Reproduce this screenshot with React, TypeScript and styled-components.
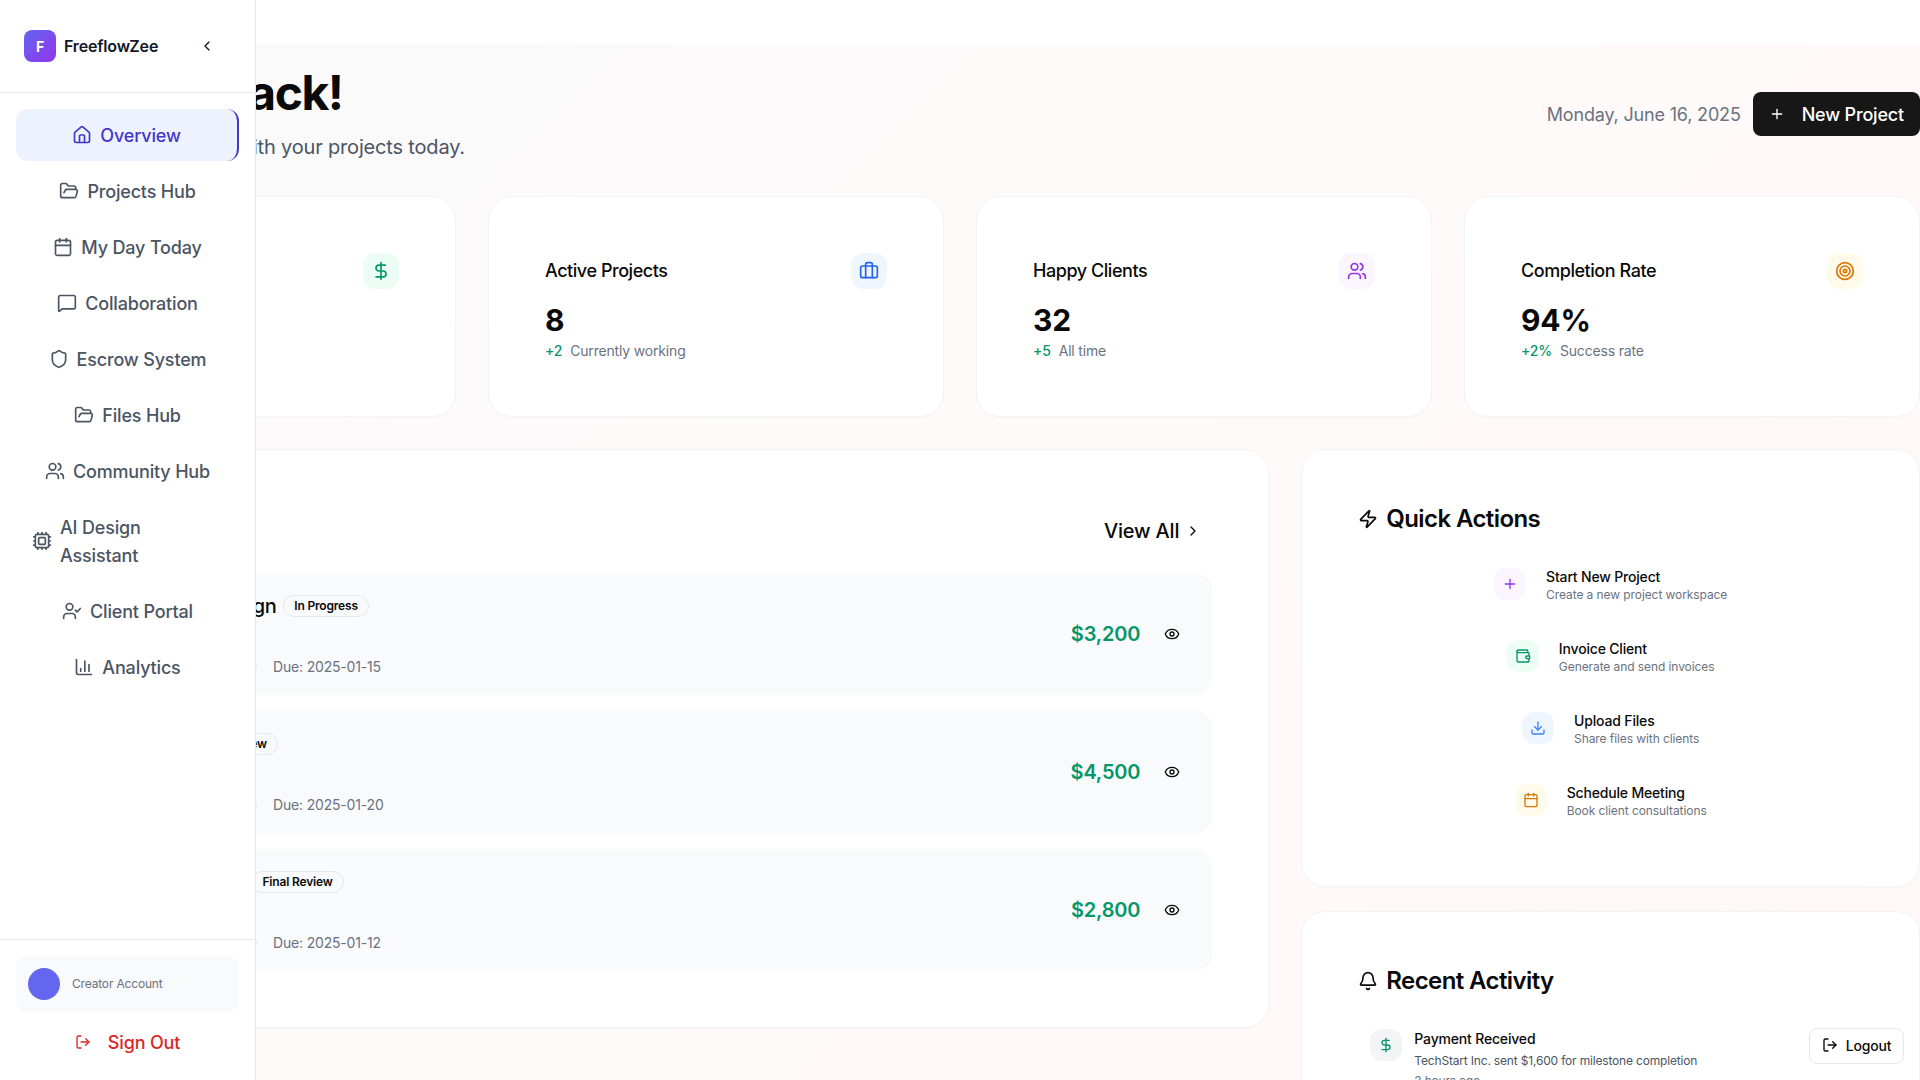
import React from 'react';
import styled, { createGlobalStyle } from 'styled-components';
import {
  House, FolderOpen, Calendar, MessageSquare, Shield, Users, Cpu, UserCheck, ChartColumn,
  LogOut, ChevronLeft, ChevronRight, DollarSign, Briefcase, Target, Zap, Bell, Plus, Wallet,
  Download, Eye, Folder,
} from 'lucide-react';

const Global = createGlobalStyle`
  html, body { margin: 0; padding: 0; height: 100%; overflow: hidden; background: #fff; }
  body { font-family: Inter, "Noto Sans", sans-serif; color: #0a0a0a; letter-spacing: -0.011em; }
  * { box-sizing: border-box; }
  button { font-family: inherit; background: none; border: 0; cursor: pointer; padding: 0; color: inherit; letter-spacing: inherit; }
  svg { display: block; flex: none; }
`;

const Sidebar = styled.aside`
  position: fixed; top: 0; left: 0; bottom: 0; width: 256px; z-index: 10;
  display: flex; flex-direction: column;
  background: #fff; border-right: 1px solid #e5e7eb;
`;
const SideHeader = styled.div`
  display: flex; align-items: center; justify-content: space-between;
  padding: 24px; border-bottom: 1px solid #e5e7eb; height: 93px;
`;
const Brand = styled.div`display: flex; align-items: center; gap: 8px;`;
const Logo = styled.div`
  width: 32px; height: 32px; border-radius: 8px; display: flex; align-items: center; justify-content: center;
  background: linear-gradient(135deg, #6366f1, #9333ea); color: #fff; font-size: 14px; font-weight: 700;
`;
const BrandName = styled.span`font-size: 16px; line-height: 24px; font-weight: 600; color: #111827;`;
const Collapse = styled.button`
  width: 48px; height: 44px; display: flex; align-items: center; justify-content: center; color: #111827;
`;
const Nav = styled.nav`flex: 1; display: flex; flex-direction: column; gap: 4px; padding: 16px;`;
const NavItem = styled.button<{ $active?: boolean }>`
  display: flex; align-items: center; justify-content: center; gap: 8px;
  padding: 12px 16px; border-radius: 12px;
  font-size: 18px; line-height: 28px; font-weight: 500; text-align: left; width: 100%;
  color: ${p => (p.$active ? '#4338ca' : '#4b5563')};
  background: ${p => (p.$active ? '#eef2ff' : 'transparent')};
  border-right: ${p => (p.$active ? '2px solid #4338ca' : '0')};
`;
const NavLabel = styled.span`display: block; padding-top: 1px; margin-bottom: -1px;`;
const SideFooter = styled.div`
  border-top: 1px solid #e5e7eb; padding: 16px; display: flex; flex-direction: column; gap: 8px;
`;
const Account = styled.div`
  display: flex; align-items: center; gap: 12px; padding: 12px; border-radius: 12px; background: #f9fafb;
`;
const Avatar = styled.div`width: 32px; height: 32px; border-radius: 50%; background: #6366f1;`;
const AccountLabel = styled.span`font-size: 12px; line-height: 16px; color: #6b7280;`;
const SignOut = styled.button`
  height: 44px; display: flex; align-items: center; justify-content: center; gap: 17px;
  font-size: 18px; font-weight: 500; color: #dc2626;
`;

const Page = styled.div`padding-top: 44px; width: 1920px;`;
const Main = styled.main`
  padding: 25px 0 48px;
  background: linear-gradient(135deg, #f9fafb 0%, #fffafa 50%, #fff7f7 100%);
`;
const PageHead = styled.header`
  display: flex; align-items: center; justify-content: space-between; margin-bottom: 35px;
`;
const Title = styled.h1`margin: 0 0 16px; font-size: 48px; line-height: 48px; font-weight: 700; letter-spacing: -0.03em; color: #0a0a0a;`;
const Subtitle = styled.p`margin: 0; font-size: 20px; line-height: 28px; color: #4b5563;`;
const HeadRight = styled.div`display: flex; align-items: center; gap: 12px; margin-bottom: 2px;`;
const DateText = styled.span`font-size: 18px; line-height: 28px; padding-top: 2px; color: #6b7280;`;
const NewProject = styled.button`
  height: 44px; padding: 0 16px; display: flex; align-items: center; gap: 17px; border-radius: 8px;
  background: #171717; color: #fff; font-size: 18px; font-weight: 500;
`;

const Stats = styled.section`display: grid; grid-template-columns: repeat(4, 1fr); gap: 32px; margin-bottom: 32px;`;
const Card = styled.div`
  background: #fff; border: 1px solid #f3f4f6; border-radius: 24px; padding: 56px;
  box-shadow: 0 1px 2px rgba(0,0,0,0.02);
`;
const StatCard = styled(Card)`padding-bottom: 55px;`;
const StatHead = styled.div`display: flex; align-items: center; justify-content: space-between; margin-bottom: 13px;`;
const StatLabel = styled.span`font-size: 18px; line-height: 28px; font-weight: 500; letter-spacing: -0.025em; color: #0a0a0a;`;
const IconBox = styled.div<{ $bg: string; $fg: string; $size?: number }>`
  width: ${p => p.$size ?? 32}px; height: ${p => p.$size ?? 32}px; border-radius: 12px; flex: none;
  display: flex; align-items: center; justify-content: center;
  background: ${p => p.$bg}; color: ${p => p.$fg};
`;
const StatValue = styled.div`font-size: 30px; line-height: 36px; font-weight: 700; margin-bottom: 3px; color: #0a0a0a;`;
const StatSub = styled.div`display: flex; gap: 8px; font-size: 14px; line-height: 20px; color: #6b7280;`;
const Delta = styled.span`color: #059669; font-weight: 500;`;

const Lower = styled.section`display: grid; grid-template-columns: repeat(3, 1fr); gap: 32px; align-items: start;`;
const ListCard = styled(Card)`grid-column: span 2;`;
const Side = styled.div`display: flex; flex-direction: column; gap: 24px;`;
const ListHead = styled.div`display: flex; align-items: center; justify-content: space-between; height: 48px; margin-bottom: 19px;`;
const CardTitle = styled.h2`
  margin: 0; display: flex; align-items: center; gap: 8px; font-size: 24px; line-height: 24px; font-weight: 600;
  letter-spacing: -0.025em; color: #0a0a0a;
`;
const SideCardTitle = styled(CardTitle)`margin-top: 1px;`;
const ViewAll = styled.button`
  display: flex; align-items: center; gap: 6px; padding: 0 11px; height: 44px; margin-top: 2px;
  font-size: 20px; font-weight: 500; color: #0a0a0a;
`;
const Rows = styled.div`display: flex; flex-direction: column; gap: 16px;`;
const Row = styled.div`
  display: flex; align-items: center; justify-content: space-between; height: 122px; padding: 0 24px;
  background: #f9fafb; border-radius: 16px;
`;
const RowTitleLine = styled.div`display: flex; align-items: center; gap: 7px; margin-bottom: 8px;`;
const RowTitle = styled.h3`margin: 0; font-size: 20px; line-height: 28px; font-weight: 500; letter-spacing: -0.025em; color: #0a0a0a;`;
const Badge = styled.span`
  height: 22px; padding: 0 10px; display: inline-flex; align-items: center; border-radius: 999px;
  border: 1px solid #e5e7eb; font-size: 12px; font-weight: 600; color: #0a0a0a;
`;
const Client = styled.div`font-size: 16px; line-height: 20px; color: #4b5563; margin-bottom: 9px;`;
const Meta = styled.div`display: flex; align-items: center; gap: 16px; font-size: 14px; line-height: 20px; color: #6b7280;`;
const Track = styled.div`width: 176px; height: 8px; border-radius: 4px; background: #e5e7eb; overflow: hidden;`;
const Fill = styled.div`height: 100%; background: #171717;`;
const RowRight = styled.div`display: flex; align-items: center; gap: 16px;`;
const Amount = styled.span`font-size: 20px; line-height: 28px; font-weight: 600; color: #059669;`;
const EyeBtn = styled.button`width: 32px; height: 32px; display: flex; align-items: center; justify-content: center; color: #0a0a0a;`;

const ActionList = styled.div`display: flex; flex-direction: column; gap: 12px; margin-top: 23px;`;
const Action = styled.button`
  height: 60px; width: 100%; display: flex; align-items: center; justify-content: center; gap: 20px; text-align: left;
`;
const ActionText = styled.div`padding-top: 2px;`;
const ActionTitle = styled.div`font-size: 14px; line-height: 20px; font-weight: 500; color: #0a0a0a;`;
const ActionSub = styled.div`font-size: 12px; line-height: 16px; letter-spacing: -0.007em; color: #6b7280;`;

const Activity = styled.div`display: flex; gap: 12px; padding: 12px; margin-top: 24px;`;
const ActivityTitle = styled.div`font-size: 14px; line-height: 20px; font-weight: 500; color: #0a0a0a; margin-bottom: 4px;`;
const ActivityText = styled.div`font-size: 12px; line-height: 16px; color: #4b5563; margin-bottom: 4px;`;
const ActivityTime = styled.div`font-size: 12px; line-height: 16px; color: #6b7280;`;

const Logout = styled.button`
  position: fixed; right: 16px; bottom: 16px; width: 95px; height: 36px; z-index: 20; padding-bottom: 2px;
  display: flex; align-items: center; justify-content: center; gap: 8px;
  background: #fff; border: 1px solid #e5e7eb; border-radius: 8px; font-size: 14px; font-weight: 500; color: #0a0a0a;
`;

const navItems = [
  { icon: House, label: 'Overview', active: true },
  { icon: FolderOpen, label: 'Projects Hub' },
  { icon: Calendar, label: 'My Day Today' },
  { icon: MessageSquare, label: 'Collaboration' },
  { icon: Shield, label: 'Escrow System' },
  { icon: FolderOpen, label: 'Files Hub' },
  { icon: Users, label: 'Community Hub' },
  { icon: Cpu, label: 'AI Design Assistant' },
  { icon: UserCheck, label: 'Client Portal' },
  { icon: ChartColumn, label: 'Analytics' },
];

const stats = [
  { label: 'Total Earnings', value: '$12,450', delta: '+12%', note: 'This month', icon: DollarSign, bg: '#ecfdf5', fg: '#059669' },
  { label: 'Active Projects', value: '8', delta: '+2', note: 'Currently working', icon: Briefcase, bg: '#eff6ff', fg: '#2563eb' },
  { label: 'Happy Clients', value: '32', delta: '+5', note: 'All time', icon: Users, bg: '#faf5ff', fg: '#9333ea' },
  { label: 'Completion Rate', value: '94%', delta: '+2%', note: 'Success rate', icon: Target, bg: '#fffbeb', fg: '#d97706' },
];

const projects = [
  { title: 'Brand Identity Design', status: 'In Progress', client: 'TechStart Inc.', progress: 65, due: '2025-01-15', amount: '$3,200' },
  { title: 'Logo Design', status: 'In Review', client: 'Acme Corp', progress: 40, due: '2025-01-20', amount: '$4,500' },
  { title: 'Website Redesign', status: 'Final Review', client: 'Studio Nine', progress: 90, due: '2025-01-12', amount: '$2,800' },
];

const actions = [
  { title: 'Start New Project', sub: 'Create a new project workspace', icon: Plus, bg: '#faf5ff', fg: '#9333ea' },
  { title: 'Invoice Client', sub: 'Generate and send invoices', icon: Wallet, bg: '#ecfdf5', fg: '#059669' },
  { title: 'Upload Files', sub: 'Share files with clients', icon: Download, bg: '#eff6ff', fg: '#3b82f6' },
  { title: 'Schedule Meeting', sub: 'Book client consultations', icon: Calendar, bg: '#fffbeb', fg: '#d97706' },
];

export default function App() {
  return (
    <>
      <Global />
      <Sidebar>
        <SideHeader>
          <Brand>
            <Logo>F</Logo>
            <BrandName>FreeflowZee</BrandName>
          </Brand>
          <Collapse aria-label="Collapse sidebar"><ChevronLeft size={16} /></Collapse>
        </SideHeader>
        <Nav>
          {navItems.map(({ icon: Icon, label, active }) => (
            <NavItem key={label} $active={active}>
              <Icon size={20} />
              <NavLabel>{label}</NavLabel>
            </NavItem>
          ))}
        </Nav>
        <SideFooter>
          <Account>
            <Avatar />
            <AccountLabel>Creator Account</AccountLabel>
          </Account>
          <SignOut><LogOut size={16} />Sign Out</SignOut>
        </SideFooter>
      </Sidebar>

      <Page>
        <Main>
          <PageHead>
            <div>
              <Title>Welcome back!</Title>
              <Subtitle>Here's what's happening with your projects today.</Subtitle>
            </div>
            <HeadRight>
              <DateText>Monday, June 16, 2025</DateText>
              <NewProject><Plus size={16} />New Project</NewProject>
            </HeadRight>
          </PageHead>

          <Stats>
            {stats.map(({ label, value, delta, note, icon: Icon, bg, fg }) => (
              <StatCard key={label}>
                <StatHead>
                  <StatLabel>{label}</StatLabel>
                  <IconBox $bg={bg} $fg={fg} $size={36}><Icon size={20} /></IconBox>
                </StatHead>
                <StatValue>{value}</StatValue>
                <StatSub><Delta>{delta}</Delta><span>{note}</span></StatSub>
              </StatCard>
            ))}
          </Stats>

          <Lower>
            <ListCard>
              <ListHead>
                <CardTitle><Folder size={20} />Active Projects</CardTitle>
                <ViewAll>View All<ChevronRight size={16} /></ViewAll>
              </ListHead>
              <Rows>
                {projects.map(p => (
                  <Row key={p.title}>
                    <div>
                      <RowTitleLine>
                        <RowTitle>{p.title}</RowTitle>
                        <Badge>{p.status}</Badge>
                      </RowTitleLine>
                      <Client>{p.client}</Client>
                      <Meta>
                        <Track><Fill style={{ width: `${p.progress}%` }} /></Track>
                        <span>Due: {p.due}</span>
                      </Meta>
                    </div>
                    <RowRight>
                      <Amount>{p.amount}</Amount>
                      <EyeBtn aria-label="View project"><Eye size={16} /></EyeBtn>
                    </RowRight>
                  </Row>
                ))}
              </Rows>
            </ListCard>

            <Side>
              <Card>
                <SideCardTitle><Zap size={20} />Quick Actions</SideCardTitle>
                <ActionList>
                  {actions.map(({ title, sub, icon: Icon, bg, fg }) => (
                    <Action key={title}>
                      <IconBox $bg={bg} $fg={fg}><Icon size={16} /></IconBox>
                      <ActionText>
                        <ActionTitle>{title}</ActionTitle>
                        <ActionSub>{sub}</ActionSub>
                      </ActionText>
                    </Action>
                  ))}
                </ActionList>
              </Card>
              <Card>
                <SideCardTitle><Bell size={20} />Recent Activity</SideCardTitle>
                <Activity>
                  <IconBox $bg="#f3f4f6" $fg="#059669"><DollarSign size={16} /></IconBox>
                  <div>
                    <ActivityTitle>Payment Received</ActivityTitle>
                    <ActivityText>TechStart Inc. sent $1,600 for milestone completion</ActivityText>
                    <ActivityTime>2 hours ago</ActivityTime>
                  </div>
                </Activity>
              </Card>
            </Side>
          </Lower>
        </Main>
      </Page>

      <Logout><LogOut size={16} />Logout</Logout>
    </>
  );
}
